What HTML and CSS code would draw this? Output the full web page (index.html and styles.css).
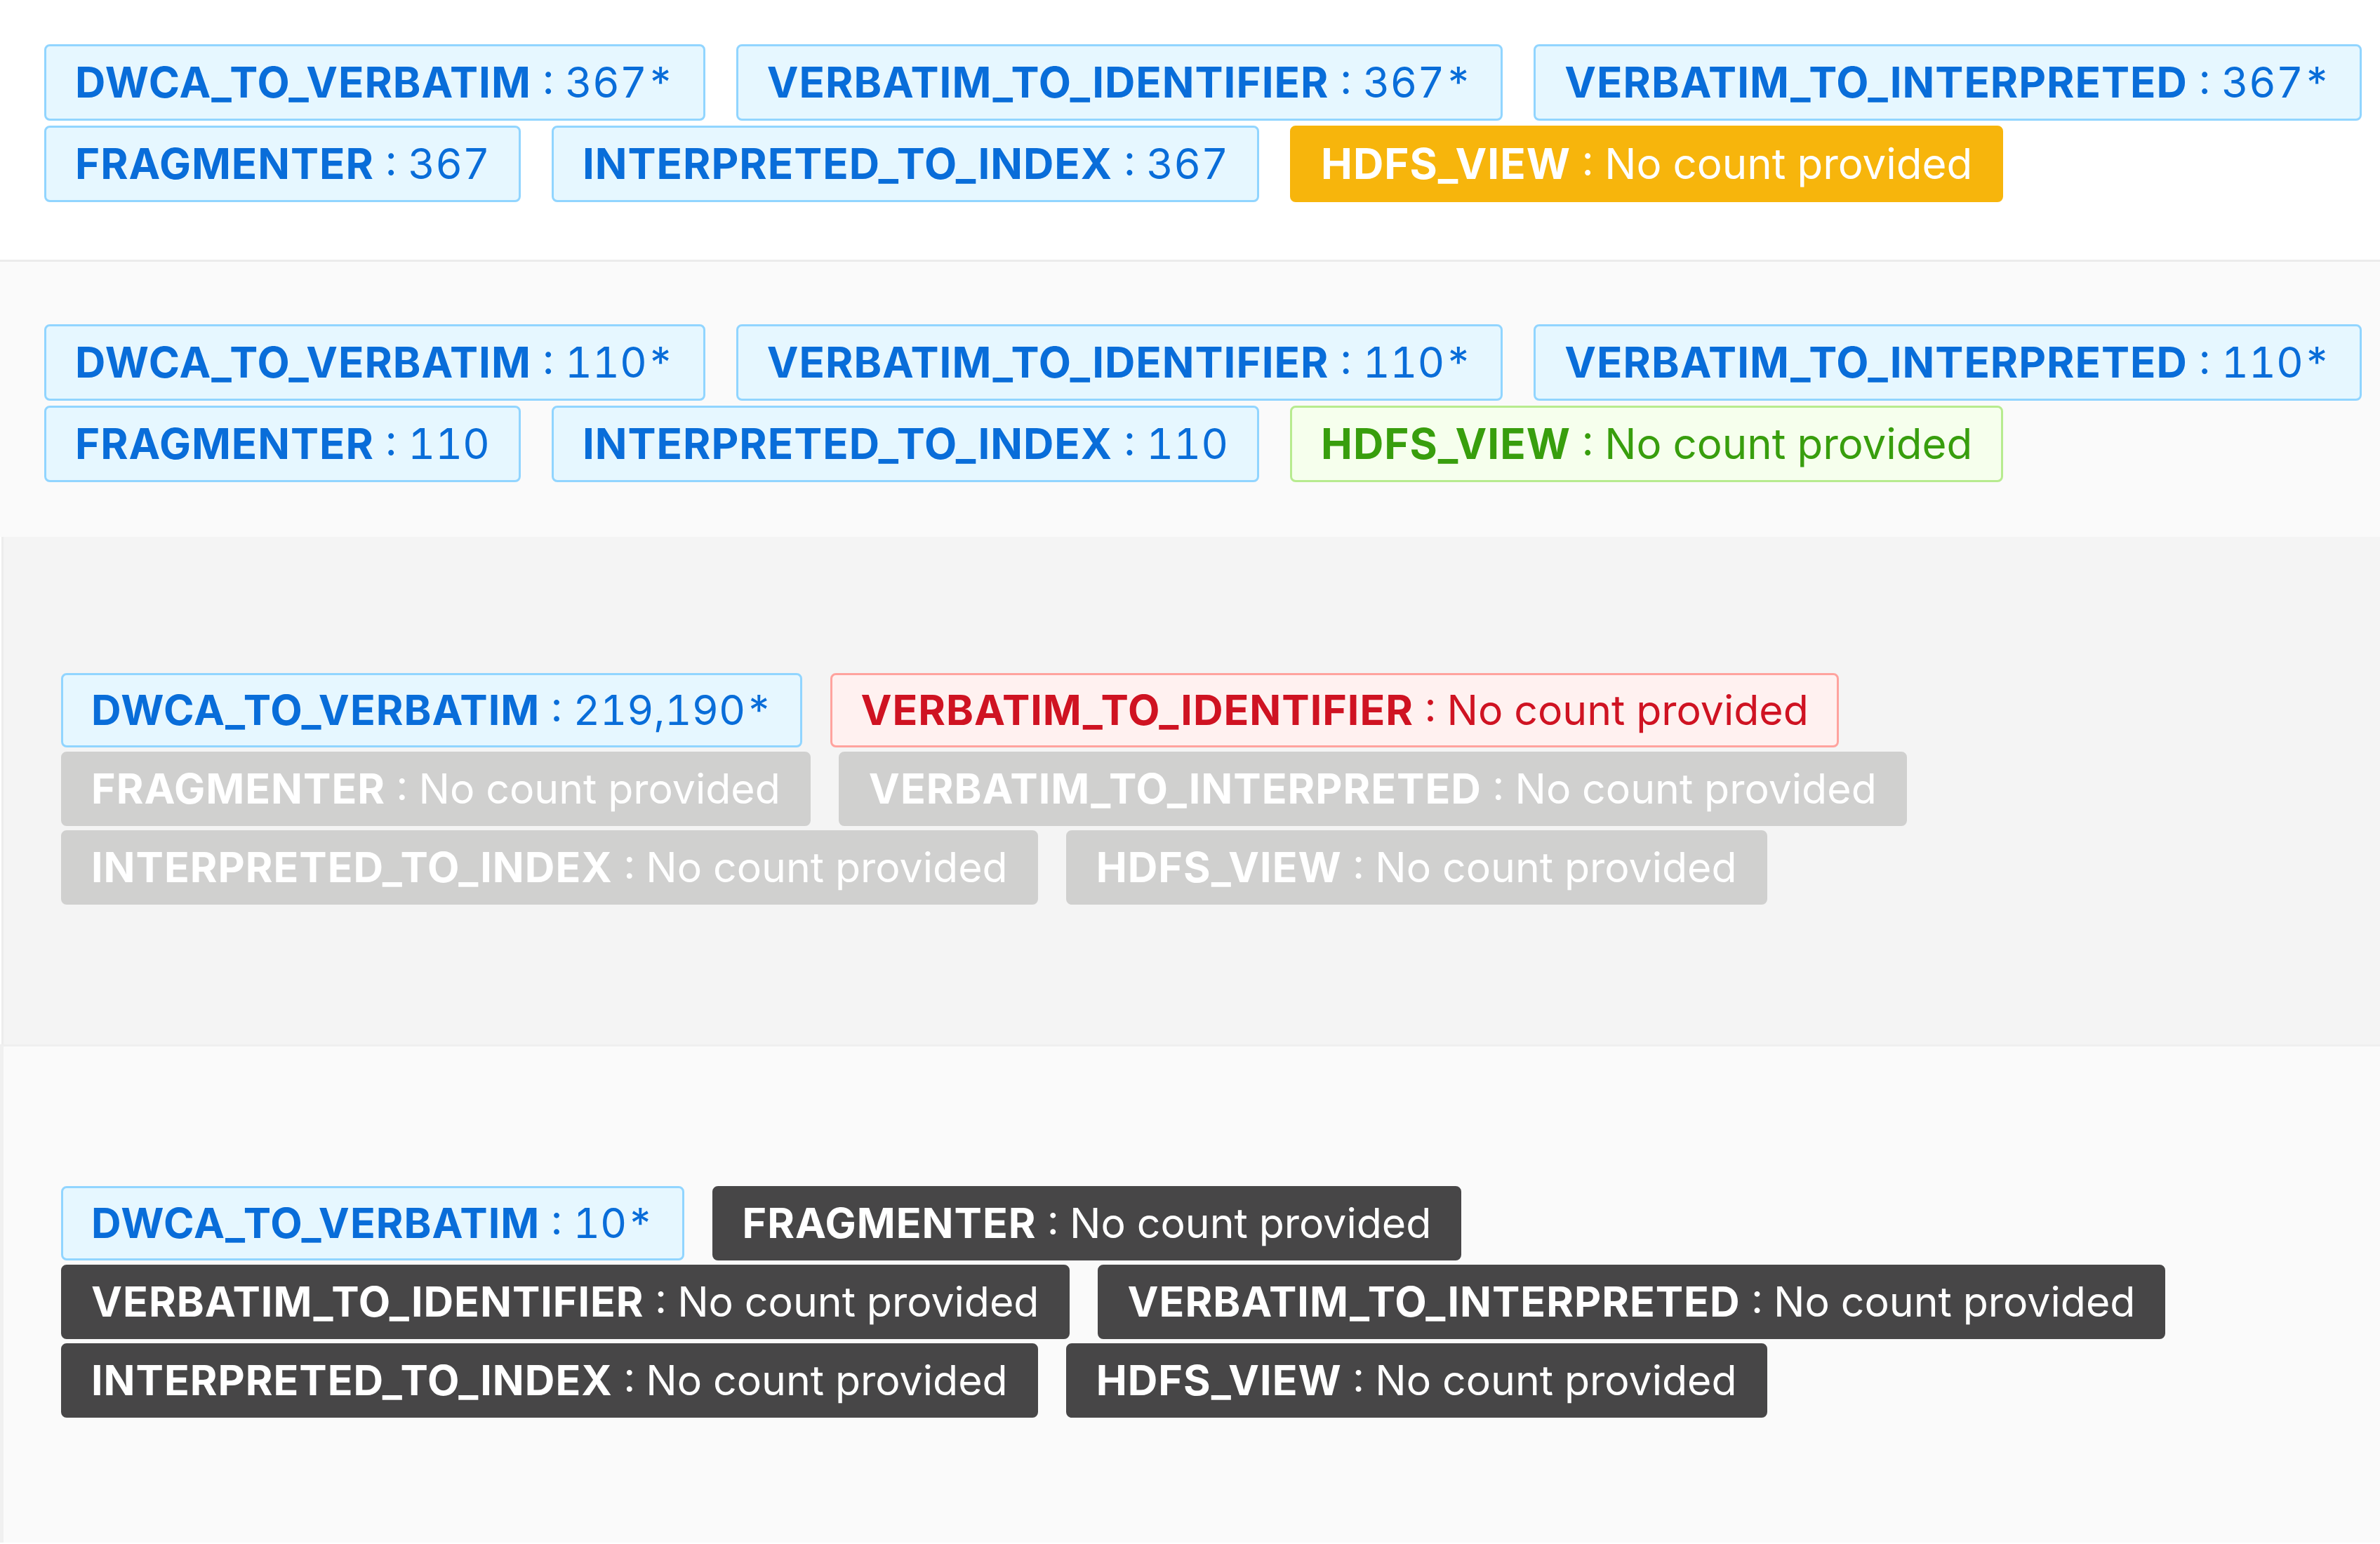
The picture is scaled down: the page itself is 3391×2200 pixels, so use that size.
FILE: index.html
```html
<!DOCTYPE html>
<html lang="en">
<head>
    <meta charset="UTF-8">
    <title>Pipeline steps</title>
    <link rel="stylesheet" href="styles.css">
</head>
<body>
    <!-- one block per crawl attempt, each with its pipeline step counts -->
    <section class="run">
        <div class="steps">
            <span class="tag tag-blue"><b>DWCA_TO_VERBATIM</b> : 367*</span>
            <span class="tag tag-blue"><b>VERBATIM_TO_IDENTIFIER</b> : 367*</span>
            <span class="tag tag-blue"><b>VERBATIM_TO_INTERPRETED</b> : 367*</span>
            <span class="tag tag-blue"><b>FRAGMENTER</b> : 367</span>
            <span class="tag tag-blue"><b>INTERPRETED_TO_INDEX</b> : 367</span>
            <span class="tag tag-orange"><b>HDFS_VIEW</b> : No count provided</span>
        </div>
    </section>

    <section class="run run-alt">
        <div class="steps">
            <span class="tag tag-blue"><b>DWCA_TO_VERBATIM</b> : 110*</span>
            <span class="tag tag-blue"><b>VERBATIM_TO_IDENTIFIER</b> : 110*</span>
            <span class="tag tag-blue"><b>VERBATIM_TO_INTERPRETED</b> : 110*</span>
            <span class="tag tag-blue"><b>FRAGMENTER</b> : 110</span>
            <span class="tag tag-blue"><b>INTERPRETED_TO_INDEX</b> : 110</span>
            <span class="tag tag-green"><b>HDFS_VIEW</b> : No count provided</span>
        </div>
    </section>

    <section class="run run-failed">
        <div class="steps steps-small">
            <span class="tag tag-blue"><b>DWCA_TO_VERBATIM</b> : 219,190*</span>
            <span class="tag tag-red"><b>VERBATIM_TO_IDENTIFIER</b> : No count provided</span>
            <span class="tag tag-gray"><b>FRAGMENTER</b> : No count provided</span>
            <span class="tag tag-gray"><b>VERBATIM_TO_INTERPRETED</b> : No count provided</span>
            <span class="tag tag-gray"><b>INTERPRETED_TO_INDEX</b> : No count provided</span>
            <span class="tag tag-gray"><b>HDFS_VIEW</b> : No count provided</span>
        </div>
    </section>

    <section class="run run-old">
        <div class="steps steps-small">
            <span class="tag tag-blue"><b>DWCA_TO_VERBATIM</b> : 10*</span>
            <span class="tag tag-dark"><b>FRAGMENTER</b> : No count provided</span>
            <span class="tag tag-dark"><b>VERBATIM_TO_IDENTIFIER</b> : No count provided</span>
            <span class="tag tag-dark"><b>VERBATIM_TO_INTERPRETED</b> : No count provided</span>
            <span class="tag tag-dark"><b>INTERPRETED_TO_INDEX</b> : No count provided</span>
            <span class="tag tag-dark"><b>HDFS_VIEW</b> : No count provided</span>
        </div>
    </section>
</body>
</html>
```

FILE: styles.css
```css
/* Page */
body {
    margin: 0;
    font-family: Inter, "Noto Sans", sans-serif;
    font-feature-settings: "tnum";
    background-color: #fff;
}

/* Run blocks */
.run {
    padding: 63px 0 82px 63px;
    border-bottom: 3px solid #ebebeb;
    background-color: #fff;
}

.run-alt {
    padding-top: 89px;
    padding-bottom: 78px;
    background-color: #fafafa;
    border-bottom: none;
}

.run-failed {
    padding: 194px 0 199px 82px;
    margin-left: 2px;
    border-left: 3px solid #ececec;
    border-bottom: none;
    background-color: #f4f4f4;
}

.run-old {
    padding: 199px 0 178px 82px;
    border-left: 5px solid #f0f0f0;
    border-top: 3px solid #efefef;
    border-bottom: none;
    background-color: #fafafa;
}

/* Step tags */
.steps {
    display: flex;
    flex-wrap: wrap;
    column-gap: 44px;
    row-gap: 7px;
}

.tag {
    display: inline-block;
    padding: 0 41px;
    border: 3px solid transparent;
    border-radius: 8px;
    font-size: 60px;
    line-height: 103px;
    font-weight: 400;
    white-space: nowrap;
}

.tag b {
    font-weight: 700;
    letter-spacing: 1px;
}

.steps-small {
    column-gap: 40px;
    row-gap: 6px;
}

.steps-small .tag {
    padding: 0 40px;
    font-size: 59px;
    line-height: 100px;
}

.tag-blue {
    background-color: #e6f7ff;
    border-color: #91d5ff;
    color: #096dd9;
}

.tag-orange {
    background-color: #f7b50c;
    border-color: #f7b50c;
    color: #fff;
}

.tag-green {
    background-color: #f6ffed;
    border-color: #b7eb8f;
    color: #389e0d;
}

.tag-red {
    background-color: #fff1f0;
    border-color: #ffa39e;
    color: #cf1322;
}

.tag-gray {
    background-color: #d0d0cf;
    border-color: #d0d0cf;
    color: #fff;
}

.tag-dark {
    background-color: #474647;
    border-color: #474647;
    color: #fff;
}
```
